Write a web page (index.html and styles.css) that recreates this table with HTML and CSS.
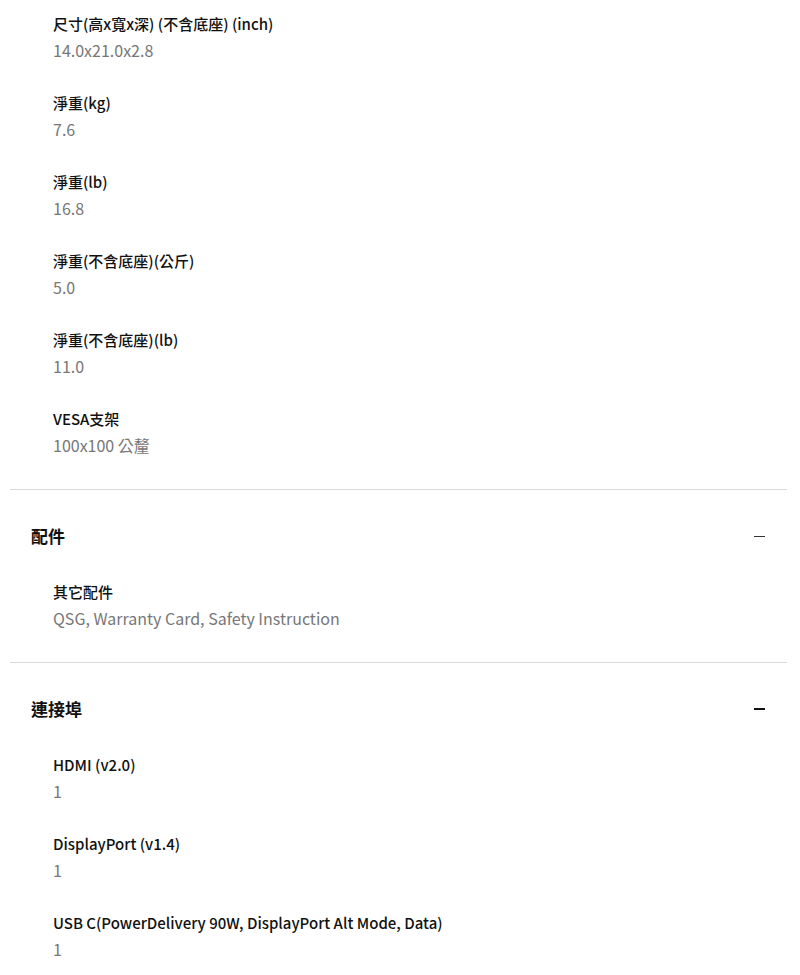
FILE: index.html
```html
<!DOCTYPE html>
<html lang="zh-Hant">
<head>
    <meta charset="UTF-8">
    <meta name="viewport" content="width=device-width, initial-scale=1.0">
    <title>規格</title>
    <link rel="stylesheet" href="styles.css">
</head>
<body>
    <div class="specs">
        <div class="section">
            <div class="items">
                <div class="item">
                    <div class="label">尺寸(高x寬x深) (不含底座) (inch)</div>
                    <div class="value">14.0x21.0x2.8</div>
                </div>
                <div class="item">
                    <div class="label">淨重(kg)</div>
                    <div class="value">7.6</div>
                </div>
                <div class="item">
                    <div class="label">淨重(lb)</div>
                    <div class="value">16.8</div>
                </div>
                <div class="item">
                    <div class="label">淨重(不含底座)(公斤)</div>
                    <div class="value">5.0</div>
                </div>
                <div class="item">
                    <div class="label">淨重(不含底座)(lb)</div>
                    <div class="value">11.0</div>
                </div>
                <div class="item">
                    <div class="label">VESA支架</div>
                    <div class="value">100x100 公釐</div>
                </div>
            </div>
        </div>

        <div class="section">
            <div class="section-head">
                <h2>配件</h2>
                <span class="toggle thin"></span>
            </div>
            <div class="items">
                <div class="item">
                    <div class="label">其它配件</div>
                    <div class="value">QSG, Warranty Card, Safety Instruction</div>
                </div>
            </div>
        </div>

        <div class="section">
            <div class="section-head">
                <h2>連接埠</h2>
                <span class="toggle"></span>
            </div>
            <div class="items">
                <div class="item">
                    <div class="label">HDMI (v2.0)</div>
                    <div class="value">1</div>
                </div>
                <div class="item">
                    <div class="label">DisplayPort (v1.4)</div>
                    <div class="value">1</div>
                </div>
                <div class="item">
                    <div class="label">USB C(PowerDelivery 90W, DisplayPort Alt Mode, Data)</div>
                    <div class="value">1</div>
                </div>
            </div>
        </div>
    </div>
</body>
</html>
```

FILE: styles.css
```css
body {
    margin: 0;
    font-family: "Noto Sans CJK TC", "Noto Sans", sans-serif;
    background-color: #fff;
    color: #111;
}
.specs {
    padding: 10px 13px 0 10px;
}
.section {
    border-bottom: 1px solid #d9d9d9;
}
.section:last-child {
    border-bottom: none;
}
.section-head {
    display: flex;
    align-items: center;
    justify-content: space-between;
    padding: 34px 22px 0 21px;
}
.section-head h2 {
    margin: 0;
    font-size: 17px;
    line-height: 24px;
    font-weight: bold;
}
.toggle {
    width: 11px;
    height: 2px;
    background-color: #111;
}
.toggle.thin {
    height: 1px;
    background-color: #333;
}
.items {
    display: flex;
    flex-direction: column;
    gap: 25px;
    padding: 0 0 30px 43px;
}
.section-head + .items {
    padding-top: 30px;
}
.label {
    font-size: 15px;
    line-height: 27px;
    font-weight: 500;
}
.value {
    font-size: 16px;
    line-height: 27px;
    color: #777;
}
```
